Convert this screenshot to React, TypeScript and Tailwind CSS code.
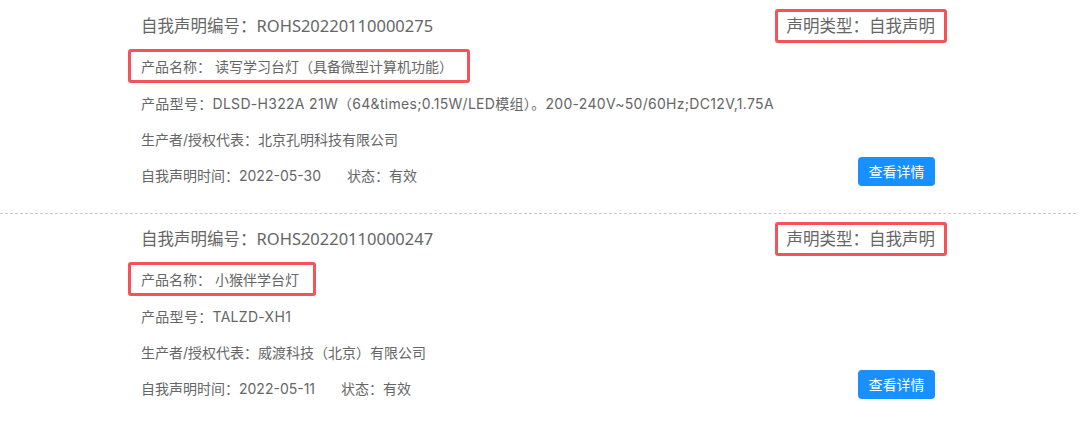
import React from "react";

interface Declaration {
  code: string;
  name: string;
  model: string;
  maker: string;
  date: string;
  status: string;
}

const items: Declaration[] = [
  {
    code: "ROHS20220110000275",
    name: "读写学习台灯（具备微型计算机功能）",
    model: "DLSD-H322A 21W（64&times;0.15W/LED模组）。200-240V~50/60Hz;DC12V,1.75A",
    maker: "北京孔明科技有限公司",
    date: "2022-05-30",
    status: "有效",
  },
  {
    code: "ROHS20220110000247",
    name: "小猴伴学台灯",
    model: "TALZD-XH1",
    maker: "威渡科技（北京）有限公司",
    date: "2022-05-11",
    status: "有效",
  },
];

const titleFont = {
  fontFamily: '"Noto Sans", "Noto Sans CJK SC", sans-serif',
};

const rowFont = {
  fontFamily: '"Inter", "Noto Sans CJK SC", sans-serif',
};

const Card = ({ item, top }: { item: Declaration; top: string }) => {
  return (
    <div className={`pl-[141px] pr-[145px] pb-[18px] ${top}`}>
      {/* Title row */}
      <div
        className="flex h-[34px] items-center justify-between text-[16.5px] text-[#666]"
        style={titleFont}
      >
        <span>自我声明编号：{item.code}</span>
        <span className="-mr-[12px] flex h-[34px] items-center rounded-[3px] border-[3px] border-[#f5535a] px-[9px]">
          声明类型：自我声明
        </span>
      </div>

      <div style={rowFont} className="text-[14px] text-[#666]">
        {/* Product name, boxed */}
        <div className="mt-[6px] -ml-[13px] flex h-[34px] w-fit items-center rounded-[3px] border-[3px] border-[#f5535a] pl-[10px] pr-[14px]">
          <span>产品名称：</span>
          <span className="ml-[4px]">{item.name}</span>
        </div>

        <div className="mt-[2px] flex h-[36px] items-center tracking-[0.3px]">
          产品型号：{item.model}
        </div>
        <div className="flex h-[36px] items-center">
          生产者/授权代表：{item.maker}
        </div>
        <div className="flex items-start justify-between">
          <div className="leading-[38px]">
            自我声明时间：{item.date}
            <span className="ml-[26px]">状态：{item.status}</span>
          </div>
          <button className="h-[29px] w-[77px] rounded-[4px] bg-[#1890ff] text-[14px] text-white">
            查看详情
          </button>
        </div>
      </div>
    </div>
  );
};

export default function App() {
  return (
    <div className="h-[425px] w-[1080px] overflow-hidden bg-white">
      <Card item={items[0]} top="pt-[9px]" />
      <div className="mr-[4px] border-t border-dashed border-[#c8c8c8]" />
      <Card item={items[1]} top="pt-[8px]" />
    </div>
  );
}
